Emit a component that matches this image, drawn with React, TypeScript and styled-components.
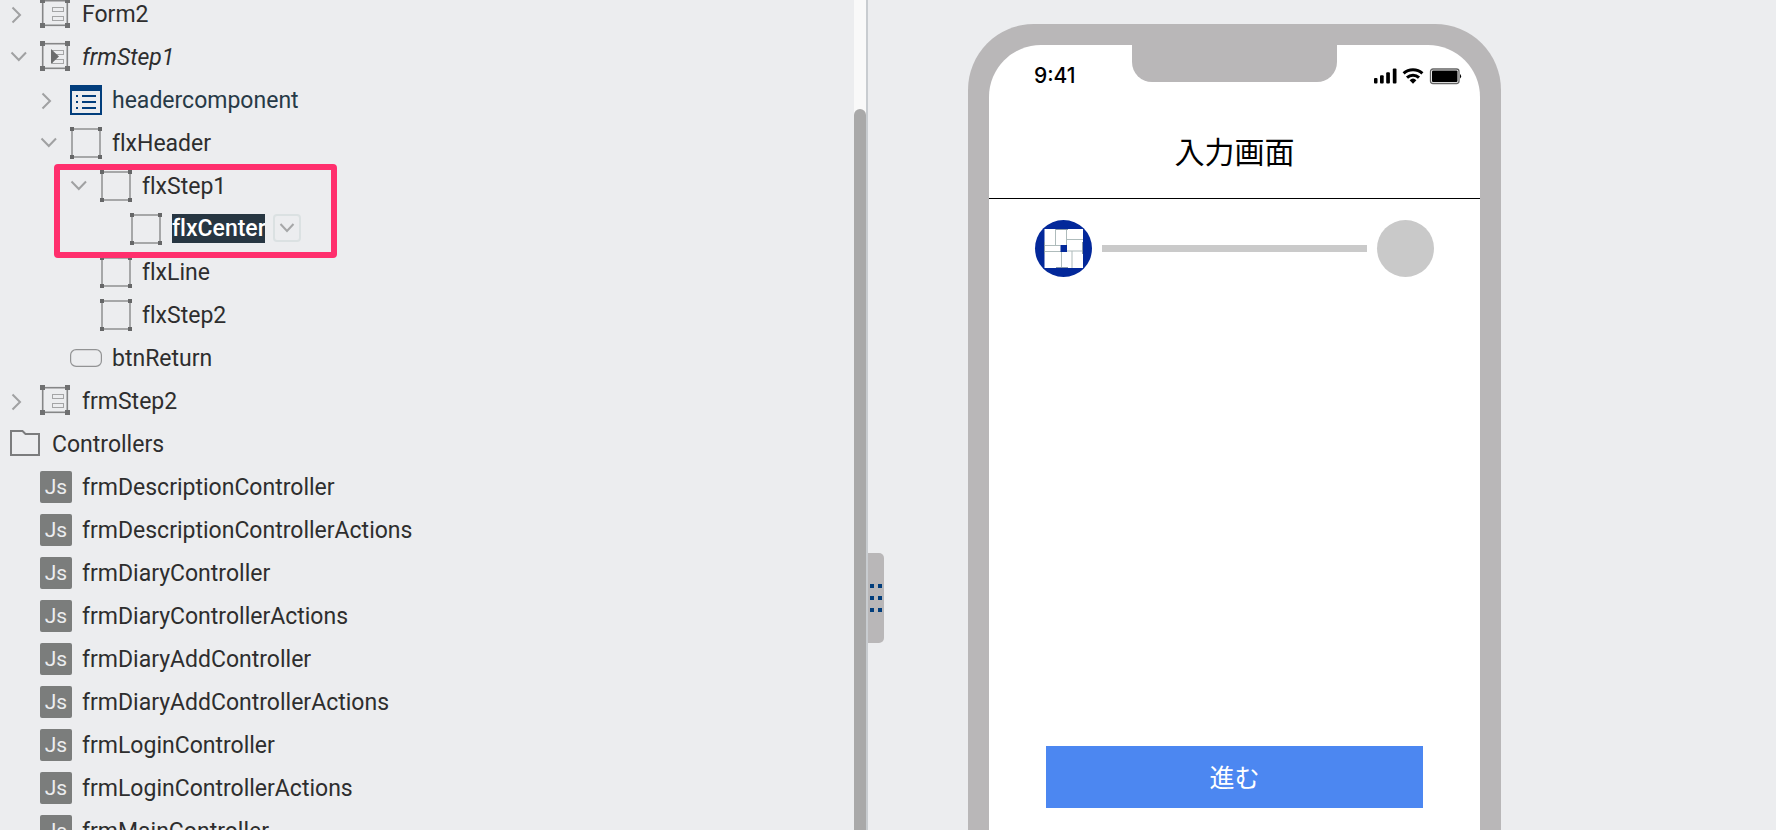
import React from 'react';
import styled, { createGlobalStyle } from 'styled-components';

const GlobalStyle = createGlobalStyle`
  *, *::before, *::after { box-sizing: border-box; }
  body { margin: 0; background: #ecedef; }
`;

const Workspace = styled.main`
  display: grid;
  grid-template-columns: 868fr 908fr;
  height: 100vh;
  overflow: hidden;
  font-family: Roboto, "Noto Sans CJK JP", sans-serif;
  color: #2e2e2e;
`;

const Explorer = styled.aside`
  display: flex;
  min-width: 0;
  height: 100vh;
  border-right: 2px solid #c8ccd0;
`;

const TreeViewport = styled.nav`
  flex: 1;
  min-width: 0;
  overflow: hidden;
`;

const Tree = styled.ul`
  list-style: none;
  margin: -8px 0 0;
  padding: 0;
`;

const Branch = styled.ul`
  list-style: none;
  margin: 0;
  padding: 0;
`;

const HighlightedItem = styled.li`
  position: relative;

  &::after {
    content: '';
    position: absolute;
    top: 0;
    bottom: -8px;
    left: 54px;
    width: 283px;
    border: 6px solid #ff2f6d;
    border-radius: 4px;
    pointer-events: none;
  }
`;

const Row = styled.div<{ $level: number }>`
  display: flex;
  align-items: center;
  height: 43px;
  padding: 6px 0 5px ${(p) => 10 + p.$level * 30}px;
`;

const Toggle = styled.button`
  display: flex;
  width: 30px;
  height: 32px;
  padding: 0;
  border: 0;
  background: none;
`;

const ToggleSpace = styled.span`
  width: 30px;
`;

const IconSlot = styled.span`
  display: flex;
  width: 32px;
  height: 32px;
  margin-right: 10px;
`;

const Label = styled.span<{ $tone?: string; $italic?: boolean }>`
  padding-top: 2px;
  font-size: 23px;
  line-height: 30px;
  font-variant-ligatures: none;
  white-space: nowrap;
  color: ${(p) => p.$tone || 'inherit'};
  font-style: ${(p) => (p.$italic ? 'italic' : 'normal')};
`;

const NameInput = styled.input`
  width: 93px;
  height: 29px;
  margin-bottom: 2px;
  padding: 0;
  border: 0;
  outline: 0;
  background: #273642;
  color: #fff;
  font: 500 23px/29px Roboto, sans-serif;
  font-variant-ligatures: none;
`;

const MenuButton = styled.button`
  display: flex;
  align-items: center;
  justify-content: center;
  width: 28px;
  height: 28px;
  margin: 0 0 2px 8px;
  padding: 0;
  border: 2px solid #dbe1e2;
  border-radius: 4px;
  background: none;
`;

const JsBadge = styled.span`
  width: 32px;
  height: 32px;
  border-radius: 2px;
  background: #7b7d7c;
  color: #ecedef;
  font-size: 21px;
  line-height: 33px;
  text-align: center;
`;

const ScrollTrack = styled.div`
  display: flex;
  width: 12px;
  padding-top: 109px;
  background: #f9f9f9;
`;

const ScrollThumb = styled.div`
  flex: 1;
  border-radius: 6px 6px 0 0;
  background: #a9a9a9;
`;

const Canvas = styled.section`
  position: relative;
  min-width: 0;
  height: 100vh;
  padding: 24px 0 0 100px;
`;

const ResizeHandle = styled.button`
  position: absolute;
  top: 553px;
  left: 0;
  display: grid;
  grid-template-columns: 4px 4px;
  gap: 8px 4px;
  align-content: center;
  justify-content: center;
  width: 16px;
  height: 90px;
  padding: 0;
  border: 0;
  border-radius: 0 5px 5px 0;
  background: #b9b7b8;
`;

const GripDot = styled.span`
  width: 4px;
  height: 4px;
  background: #023e7c;
`;

const Phone = styled.div`
  position: relative;
  width: 533px;
  max-width: 100%;
  height: 100%;
  padding: 21px 21px 0;
  border-radius: 66px 66px 0 0;
  background: #b9b7b8;
`;

const Screen = styled.div`
  display: flex;
  flex-direction: column;
  height: 100%;
  border-radius: 52px 52px 0 0;
  background: #fff;
`;

const Notch = styled.div`
  position: absolute;
  top: 21px;
  left: 0;
  right: 0;
  width: 205px;
  height: 37px;
  margin: 0 auto;
  border-radius: 0 0 20px 20px;
  background: #b9b7b8;
`;

const StatusBar = styled.div`
  display: flex;
  align-items: center;
  justify-content: space-between;
  height: 62px;
  padding: 0 18px 0 45px;
`;

const Clock = styled.span`
  color: #000;
  font: 500 21px/24px Inter, sans-serif;
`;

const Title = styled.h1`
  margin: 0;
  height: 92px;
  border-bottom: 1px solid #000;
  color: #000;
  font: 400 30px/86px "Noto Sans CJK JP", sans-serif;
  text-align: center;
`;

const Stepper = styled.div`
  display: flex;
  align-items: center;
  justify-content: space-between;
  gap: 10px;
  padding: 21px 46px;
`;

const StepLine = styled.span`
  flex: 1;
  height: 7px;
  background: #cacaca;
`;

const StepDot = styled.span<{ $active?: boolean }>`
  display: flex;
  width: 57px;
  height: 57px;
  border-radius: 50%;
  background: ${(p) => (p.$active ? '#03289a' : '#c9c9c9')};
`;

const NextButton = styled.button`
  height: 62px;
  margin: auto 57px 22px;
  padding: 0 0 2px;
  border: 0;
  background: #4c87f1;
  color: #fff;
  font: 400 25px/60px "Noto Sans CJK JP", sans-serif;
`;

const Chevron = ({ open }: { open?: boolean }) => (
  <svg width="18" height="32" viewBox="0 0 18 32" fill="none" stroke="#a0a1a2" strokeWidth="2" aria-hidden="true">
    <path d={open ? 'M1.5 11.5 8.8 19l7.2-7.5' : 'M2.5 9.5 10 17l-7.5 7.5'} />
  </svg>
);

const FlexIcon = () => (
  <svg width="32" height="32" viewBox="0 0 32 32" aria-hidden="true">
    <rect x="2" y="2" width="28" height="28" fill="none" stroke="#a6a7a8" strokeWidth="2" />
    <path d="M0 0h4v4H0zM28 0h4v4h-4zM0 28h4v4H0zM28 28h4v4h-4z" fill="#666768" />
  </svg>
);

const FormIcon = ({ startup }: { startup?: boolean }) => (
  <svg width="32" height="32" viewBox="0 0 32 32" aria-hidden="true">
    <g fill="none" stroke="#a4a5a6">
      <rect x="2.7" y="2.7" width="24.6" height="24.6" stroke="#858687" strokeWidth="1.6" />
      <rect x="12.5" y="9.5" width="11" height="4" />
      <rect x="12.5" y="18.5" width="11" height="4" />
    </g>
    <path d="M0 0h5v5H0zM25 0h5v5h-5zM0 25h5v5H0zM25 25h5v5h-5z" fill="#6f7071" />
    {startup && <path d="M11 8v15l8-7.500z" fill="#6b6c6d" />}
  </svg>
);

const ComponentIcon = () => (
  <svg width="32" height="32" viewBox="0 0 32 32" aria-hidden="true">
    <path d="M0 1h32v30H0zM2 7v22h28V7z" fill="#023e7c" fillRule="evenodd" />
    <path d="M6 11h2v2H6zM12 11h14v2H12zM6 17h2v2H6zM12 17h14v2H12zM6 23h2v2H6zM12 23h14v2H12z" fill="#023e7c" />
  </svg>
);

const ButtonIcon = () => (
  <svg width="32" height="32" viewBox="0 0 32 32" aria-hidden="true">
    <rect x=".6" y="7.6" width="30.8" height="16.8" rx="5.5" fill="none" stroke="#929394" strokeWidth="1.2" />
  </svg>
);

const FolderIcon = () => (
  <svg width="32" height="32" viewBox="0 0 32 32" aria-hidden="true">
    <path d="M1 3h11.5l3 3H29v21H1z" fill="none" stroke="#7b7c7d" strokeWidth="2" />
  </svg>
);

type IconKind = 'form' | 'startup' | 'component' | 'flex' | 'button' | 'js' | 'folder';

const NodeIcon = ({ kind }: { kind: IconKind }) => {
  switch (kind) {
    case 'form': return <FormIcon />;
    case 'startup': return <FormIcon startup />;
    case 'component': return <ComponentIcon />;
    case 'flex': return <FlexIcon />;
    case 'button': return <ButtonIcon />;
    case 'folder': return <FolderIcon />;
    default: return <JsBadge>Js</JsBadge>;
  }
};

interface NodeProps {
  level: number;
  kind: IconKind;
  name: string;
  expand?: 'open' | 'closed' | 'none';
  editing?: boolean;
}

const NodeRow = ({ level, kind, name, expand, editing }: NodeProps) => (
  <Row $level={level}>
    {expand === 'open' || expand === 'closed' ? (
      <Toggle aria-label={`Toggle ${name}`} aria-expanded={expand === 'open'}>
        <Chevron open={expand === 'open'} />
      </Toggle>
    ) : (
      expand !== 'none' && <ToggleSpace />
    )}
    <IconSlot><NodeIcon kind={kind} /></IconSlot>
    {editing ? (
      <>
        <NameInput aria-label="Widget name" defaultValue={name} />
        <MenuButton aria-label={`${name} menu`}>
          <svg width="16" height="10" viewBox="0 0 16 10" fill="none" stroke="#a6a7a8" strokeWidth="2" aria-hidden="true">
            <path d="M1.5 1 8 8l6.500-7" />
          </svg>
        </MenuButton>
      </>
    ) : (
      <Label $italic={kind === 'startup'} $tone={kind === 'component' ? '#273a47' : undefined}>{name}</Label>
    )}
  </Row>
);

const controllers = [
  'frmDescriptionController',
  'frmDescriptionControllerActions',
  'frmDiaryController',
  'frmDiaryControllerActions',
  'frmDiaryAddController',
  'frmDiaryAddControllerActions',
  'frmLoginController',
  'frmLoginControllerActions',
  'frmMainController',
];

const StatusIcons = () => (
  <svg width="89" height="18" viewBox="0 0 89 18" aria-hidden="true">
    <g>
      <rect x="1" y="11" width="3.500" height="5.500" rx="1" />
      <rect x="7" y="8.300" width="3.700" height="8.200" rx="1" />
      <rect x="13.200" y="5.200" width="3.700" height="11.300" rx="1" />
      <rect x="19.800" y="1.500" width="3.700" height="15" rx="1" />
    </g>
    <g fill="none" stroke="#000" strokeWidth="3">
      <path d="M30.600 6.400a13.800 13.800 0 0 1 18.800 0" />
      <path d="M34 10.600a8.800 8.800 0 0 1 12 0" />
    </g>
    <path d="M36.600 13.200a5 5 0 0 1 6.800 0L40 16.800z" />
    <rect x="57.500" y="2" width="28.500" height="14.500" rx="2.500" fill="none" stroke="#666" strokeWidth="1.300" />
    <rect x="59" y="3.500" width="25.500" height="11.500" rx="1" />
    <path d="M87 7q2.200 2.200 0 4.500z" />
  </svg>
);

const StepLogo = () => (
  <svg width="57" height="57" viewBox="0 0 57 57" aria-hidden="true">
    <path d="M9.500 9h38.500v39H9.500z" fill="#fff" />
    <g fill="none" stroke="#aebbbb" strokeWidth="1">
      <path d="M20.500 9v16M31.500 9v16M31.500 19.500H48M9.500 25.500h16M31.500 31h16M26.500 31v17M37 31v17M9.500 31.500h17" />
      <path d="M9.500 22v12M47.500 22v12M21 9.500h12M21 47.500h12" stroke="#8b99a8" />
    </g>
    <path d="M25.500 25h6.500v7h-6.500z" fill="#03289a" />
  </svg>
);

export default function App() {
  return (
    <>
      <GlobalStyle />
      <Workspace>
        <Explorer>
          <TreeViewport aria-label="Project">
            <Tree>
              <li><NodeRow level={0} kind="form" name="Form2" expand="closed" /></li>
              <li>
                <NodeRow level={0} kind="startup" name="frmStep1" expand="open" />
                <Branch>
                  <li><NodeRow level={1} kind="component" name="headercomponent" expand="closed" /></li>
                  <li>
                    <NodeRow level={1} kind="flex" name="flxHeader" expand="open" />
                    <Branch>
                      <HighlightedItem>
                        <NodeRow level={2} kind="flex" name="flxStep1" expand="open" />
                        <Branch>
                          <li><NodeRow level={3} kind="flex" name="flxCenter" editing /></li>
                        </Branch>
                      </HighlightedItem>
                      <li><NodeRow level={2} kind="flex" name="flxLine" /></li>
                      <li><NodeRow level={2} kind="flex" name="flxStep2" /></li>
                    </Branch>
                  </li>
                  <li><NodeRow level={1} kind="button" name="btnReturn" /></li>
                </Branch>
              </li>
              <li><NodeRow level={0} kind="form" name="frmStep2" expand="closed" /></li>
              <li>
                <NodeRow level={0} kind="folder" name="Controllers" expand="none" />
                <Branch>
                  {controllers.map((name) => (
                    <li key={name}><NodeRow level={0} kind="js" name={name} /></li>
                  ))}
                </Branch>
              </li>
            </Tree>
          </TreeViewport>
          <ScrollTrack><ScrollThumb /></ScrollTrack>
        </Explorer>
        <Canvas>
          <ResizeHandle aria-label="Resize panel">
            {[0, 1, 2, 3, 4, 5].map((n) => <GripDot key={n} />)}
          </ResizeHandle>
          <Phone>
            <Notch />
            <Screen>
              <StatusBar>
                <Clock>9:41</Clock>
                <StatusIcons />
              </StatusBar>
              <Title>入力画面</Title>
              <Stepper>
                <StepDot $active><StepLogo /></StepDot>
                <StepLine />
                <StepDot />
              </Stepper>
              <NextButton>進む</NextButton>
            </Screen>
          </Phone>
        </Canvas>
      </Workspace>
    </>
  );
}
